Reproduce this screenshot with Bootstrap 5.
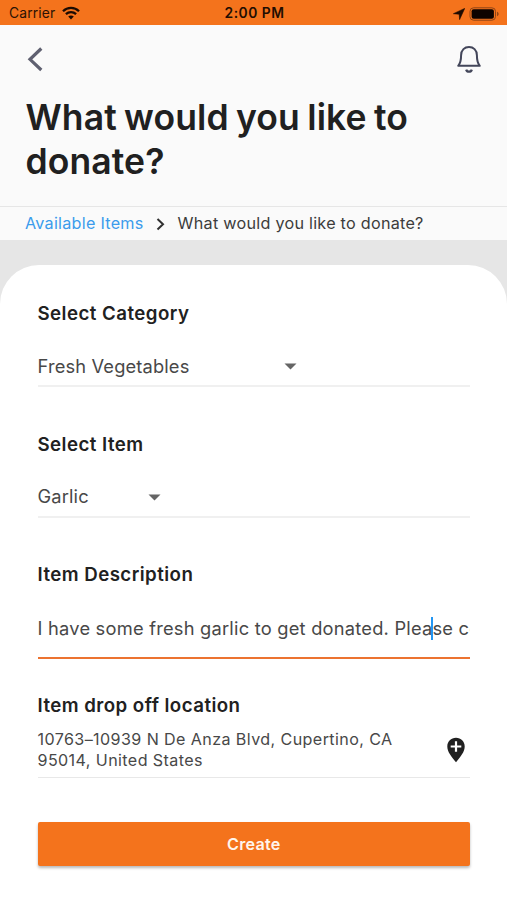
<!DOCTYPE html>
<html lang="en">
<head>
<meta charset="utf-8">
<meta name="viewport" content="width=device-width, initial-scale=1">
<title>What would you like to donate?</title>
<link href="https://cdn.jsdelivr.net/npm/bootstrap@5.3.0/dist/css/bootstrap.min.css" rel="stylesheet">
<style>
  body { font-family: Inter, "Liberation Sans", sans-serif; background: #e6e6e6; color: #212121; width: 507px; height: 900px; overflow: hidden; }
  svg { display: block; flex: none; }
  .statusbar { height: 25px; background: #f4731c; color: #2b1204; font-size: 13.8px; line-height: 25px; padding: 2px 7px 0 9px; }
  .statusbar > div { flex: 1 1 0; height: 23px; }
  .carrier { letter-spacing: .15px; }
  .wifi { margin: -2px 0 0 7px; }
  .clock { font-weight: 600; font-size: 13.8px; letter-spacing: .5px; color: #210d02; }
  .page-head { height: 182px; background: #fafafa; border-bottom: 1px solid #e6e6e6; padding: 20px 25px 0 26px; }
  .page-title { font-size: 35.5px; line-height: 44px; font-weight: 600; margin: 22px 0 0 -.5px; color: #202020; letter-spacing: .1px; word-spacing: -1.7px; white-space: nowrap; }
  .crumbs { height: 33px; background: #fafafa; padding: 0 25px; font-size: 16.2px; color: #3c3c3c; letter-spacing: .25px; }
  .crumbs a { color: #3b9cec; }
  .crumb-arrow { margin: 0 13px 0 12px; }
  .sheet { margin-top: 25px; height: 635px; background: #fff; border-radius: 39px 39px 0 0; padding: 36px 37px 0 37.5px; }
  .field-group { height: 130.7px; }
  .field-title { font-size: 18.7px; line-height: 25px; font-weight: 600; margin: 0; color: #212121; letter-spacing: .45px; white-space: nowrap; }
  .field-line { font-size: 18.3px; color: #484848; white-space: nowrap; }
  .picker { height: 40px; margin-top: 21px; padding-top: 1px; border-bottom: 2px solid #f0f0f0; letter-spacing: .15px; }
  .picker-wide { width: 259px; }
  .picker-slim { width: 123px; }
  .entry { height: 60px; margin-top: 12px; border-bottom: 2.5px solid #ec7330; }
  .entry-text { overflow: hidden; line-height: 30px; height: 30px; width: 100%; letter-spacing: .22px; }
  .caret { display: inline-block; width: 2px; height: 23px; margin: 0 -1px; background: #2196f3; vertical-align: -5px; }
  .place { height: 60px; border-bottom: 1.5px solid #e8e8e8; font-size: 16.1px; line-height: 21px; color: #484848; letter-spacing: .4px; padding: 4px 4px 0 0; }
  .btn-create { height: 44px; margin-top: 44px; background: #f4731c; color: #fff5ec; border: 0; border-radius: 2px; font-size: 16.2px; font-weight: 600; letter-spacing: .2px; box-shadow: 0 2px 3px rgba(0,0,0,.28); padding: 0; }
</style>
</head>
<body>
<div class="statusbar d-flex">
  <div class="d-flex align-items-center">
    <span class="carrier">Carrier</span>
    <svg class="wifi" width="18" height="14" viewBox="0 0 18 14" fill="none" stroke="#1c0b02" stroke-width="2.3"><path d="M1 5.200C5.500.8 12.500.8 17 5.200M3.900 8.200c2.900-2.700 7.300-2.700 10.200 0"/><path d="M6.200 10.600C7.800 9.200 10.200 9.200 11.800 10.600L9 13.500z" fill="#1c0b02" stroke="none"/></svg>
  </div>
  <div class="clock d-flex align-items-center justify-content-center">2:00 PM</div>
  <div class="d-flex align-items-center justify-content-end">
    <svg width="12" height="12" viewBox="0 0 12 12"><path d="M11.700.4 6.600 11.600 6.200 6.200.4 5.700z" fill="#1c0b02" stroke="#1c0b02" stroke-width=".6" stroke-linejoin="round"/></svg>
    <svg class="ms-1" width="31" height="14" viewBox="0 0 31 14"><rect x="1" y=".8" width="25.500" height="12.400" rx="3.600" fill="none" stroke="#8f4517" stroke-width="1"/><rect x="2.600" y="2.300" width="22.300" height="9.400" rx="2" fill="#0d0300"/><path d="M28 4.800c2.200.7 2.200 3.700 0 4.400z" fill="#8f4517"/></svg>
  </div>
</div>
<header class="page-head">
  <div class="d-flex justify-content-between">
    <svg width="20" height="28" viewBox="0 0 20 28" fill="none" stroke="#5f6070" stroke-width="3.200"><path d="M15.300 3.500 4 14.300 15.300 25"/></svg>
    <svg width="26" height="29" viewBox="0 0 26 29" fill="none" stroke="#43465a" stroke-width="2" stroke-linejoin="round"><path d="M2.200 20.800C4.500 18.200 5.100 15 5.100 10.200 5.100 5 8.700 1.900 13 1.900s7.900 3.100 7.900 8.300c0 4.800.6 8 2.900 10.600z"/><path d="M10.200 24.600c.8 2.700 4.800 2.700 5.600 0" stroke-width="2.300"/></svg>
  </div>
  <h1 class="page-title">What would you like to<br>donate?</h1>
</header>
<nav class="crumbs d-flex align-items-center">
  <a class="text-decoration-none" href="#">Available Items</a>
  <svg class="crumb-arrow" width="9" height="14" viewBox="0 0 9 14" fill="none" stroke="#303030" stroke-width="2"><path d="M1.500 2 7 7.200 1.500 12.400"/></svg>
  <span>What would you like to donate?</span>
</nav>
<main class="sheet">
  <section class="field-group">
    <h2 class="field-title">Select Category</h2>
    <div class="picker field-line"><div class="picker-wide h-100 d-flex align-items-center justify-content-between">Fresh Vegetables
      <svg width="13" height="7" viewBox="0 0 13 7"><path d="M.5.500h12L6.500 6.500z" fill="#656565"/></svg></div></div>
  </section>
  <section class="field-group">
    <h2 class="field-title">Select Item</h2>
    <div class="picker field-line"><div class="picker-slim h-100 d-flex align-items-center justify-content-between">Garlic
      <svg width="13" height="7" viewBox="0 0 13 7"><path d="M.5.500h12L6.500 6.500z" fill="#656565"/></svg></div></div>
  </section>
  <section class="field-group">
    <h2 class="field-title">Item Description</h2>
    <div class="entry field-line d-flex align-items-center"><div class="entry-text">I have some fresh garlic to get donated. Plea<span class="caret"></span>se contact me</div></div>
  </section>
  <section>
    <h2 class="field-title">Item drop off location</h2>
    <div class="place d-flex align-items-center justify-content-between">
      <div>10763–10939 N De Anza Blvd, Cupertino, CA<br>95014, United States</div>
      <svg width="20" height="26" viewBox="0 0 20 26"><path d="M10 .8c5 0 8.700 3.700 8.700 8.600C18.700 15 14.500 19.500 10 25.200 5.500 19.500 1.300 15 1.300 9.400 1.300 4.500 5 .8 10 .8z" fill="#202020"/><path d="M10 4.200v10.600M4.700 9.500h10.600" stroke="#fff" stroke-width="2.200"/></svg>
    </div>
  </section>
  <button class="btn btn-create w-100" type="button">Create</button>
</main>
<script src="https://cdn.jsdelivr.net/npm/bootstrap@5.3.0/dist/js/bootstrap.bundle.min.js"></script>
</body>
</html>
